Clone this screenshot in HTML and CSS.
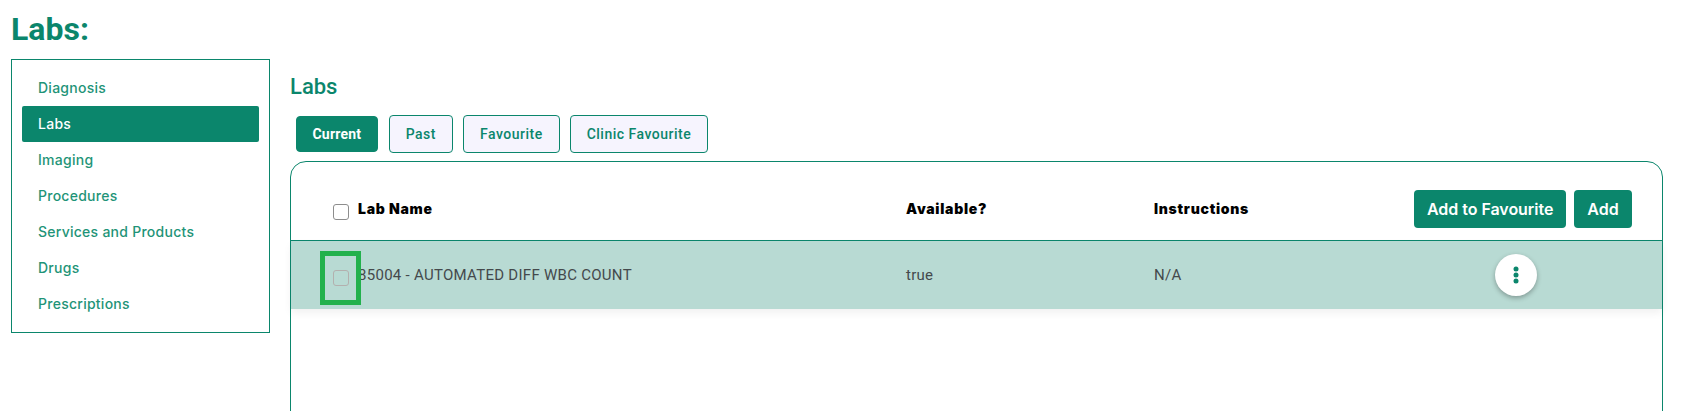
FILE: index.html
```html
<!DOCTYPE html>
<html lang="en">
<head>
<meta charset="utf-8">
<title>Labs</title>
<link rel="stylesheet" href="styles.css">
</head>
<body>
<h1 class="page-title">Labs:</h1>
<div class="layout">
  <nav class="side">
    <a class="side-item">Diagnosis</a>
    <a class="side-item active">Labs</a>
    <a class="side-item">Imaging</a>
    <a class="side-item">Procedures</a>
    <a class="side-item">Services and Products</a>
    <a class="side-item">Drugs</a>
    <a class="side-item">Prescriptions</a>
  </nav>
  <main class="content">
    <h2 class="content-title">Labs</h2>
    <div class="tabs">
      <button class="tab current">Current</button>
      <button class="tab">Past</button>
      <button class="tab">Favourite</button>
      <button class="tab">Clinic Favourite</button>
    </div>
    <section class="panel">
      <div class="grid head">
        <span class="check"></span>
        <span>Lab Name</span>
        <span>Available?</span>
        <span>Instructions</span>
        <div class="actions">
          <button class="action">Add to Favourite</button>
          <button class="action">Add</button>
        </div>
      </div>
      <div class="grid row">
        <span class="check-wrap"><span class="check dim"></span><span class="marker"></span></span>
        <span>85004 - AUTOMATED DIFF WBC COUNT</span>
        <span>true</span>
        <span>N/A</span>
        <div class="menu-cell">
          <button class="menu" aria-label="More">
            <svg width="6" height="18" viewBox="0 0 6 18"><circle cx="3" cy="3" r="2.5"/><circle cx="3" cy="9" r="2.5"/><circle cx="3" cy="15" r="2.5"/></svg>
          </button>
        </div>
      </div>
    </section>
  </main>
</div>
</body>
</html>
```
FILE: styles.css
```css
html, body { margin: 0; height: 411px; overflow: hidden; background: #fff; }
body { padding: 0 19px 0 11px; font-family: Roboto, sans-serif; box-sizing: border-box; }
.page-title { margin: 0; padding-top: 11px; height: 59px; box-sizing: border-box; font: 700 32px/36px Roboto, sans-serif; color: #0b866c; }
.layout { display: flex; align-items: flex-start; gap: 20px; }
.side { width: 259px; height: 274px; box-sizing: border-box; border: 1px solid #0b866c; padding: 10px; display: flex; flex-direction: column; flex: none; }
.side-item { height: 36px; padding: 0 0 1px 16px; box-sizing: border-box; border-radius: 2px; display: flex; align-items: center; font: 500 14px Inter, sans-serif; letter-spacing: .26px; color: #1f9478; }
.side-item.active { background: #0b866c; color: #fff; }
.content { flex: 1; min-width: 0; }
.content-title { margin: 16px 0 0; font: 500 22px/24px Roboto, sans-serif; color: #0b866c; }
.tabs { display: flex; align-items: center; gap: 10px; height: 38px; margin: 16px 0 8px 6px; }
.tab { height: 38px; padding: 0 16px; box-sizing: border-box; border: 1px solid #0b866c; border-radius: 4px; background: #f6f4fe; font: 500 14px Roboto, sans-serif; letter-spacing: .5px; color: #0b866c; }
.tab.current { height: 36px; padding: 0 15.5px; background: #0b866c; color: #fff; font-weight: 700; margin-right: 1px; letter-spacing: .2px; }
.panel { height: 300px; box-sizing: border-box; border: 1px solid #0b866c; border-radius: 16px 16px 0 0; }
.grid { display: grid; grid-template-columns: 16px 557px 248px 260px 1fr; column-gap: 0; align-items: center; padding-left: 42px; }
.grid > :nth-child(2) { margin-left: 9px; }
.head { height: 79px; padding-top: 16px; box-sizing: border-box; border-bottom: 1px solid #0b866c; font: 900 14px Inter, sans-serif; color: #000; letter-spacing: .72px; }
.head > span { margin-top: -1px; }
.head .check { margin-top: 5px; }
.check { display: block; width: 16px; height: 16px; box-sizing: border-box; border: 1px solid #8d8d8d; border-radius: 3px; background: #fff; }
.actions { display: flex; gap: 8px; }
.action { height: 38px; width: auto; padding: 0 13px; border: 0; border-radius: 4px; background: #0b866c; color: #fff; font: 600 16px Inter, sans-serif; letter-spacing: -.04px; }
.row { height: 68px; background: #b8dad3; box-shadow: 0 4px 8px rgba(0,0,0,.06); font: 400 15px Roboto, sans-serif; letter-spacing: .28px; color: #44494c; }
.check-wrap { position: relative; display: block; height: 16px; top: 3px; }
.check.dim { background: transparent; border-color: #b3b0ae; }
.marker { position: absolute; left: -13px; top: -19px; width: 41px; height: 54px; box-sizing: border-box; border: 5px solid #22b14c; }
.menu-cell { padding-left: 81px; display: flex; }
.menu { width: 42px; height: 42px; padding: 0; border: 0; border-radius: 50%; background: #fff; box-shadow: 0 2px 5px rgba(0,0,0,.3); display: flex; align-items: center; justify-content: center; }
.menu svg { fill: #0b866c; display: block; }
```
